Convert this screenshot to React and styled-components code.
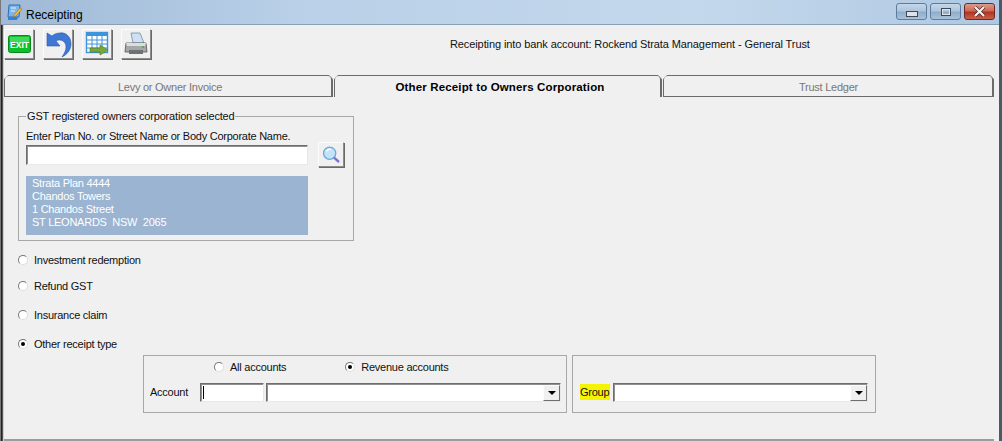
import React from 'react';
import styled, { createGlobalStyle } from 'styled-components';

const Global = createGlobalStyle`
  html, body { margin: 0; padding: 0; background: #f0f0f0; }
  body { font-family: "Liberation Sans", Arial, sans-serif; font-size: 11px; letter-spacing: -0.25px; color: #111; overflow: hidden; }
`;

const Page = styled.div`
  width: 1002px;
  height: 441px;
  display: flex;
  flex-direction: column;
  box-sizing: border-box;
  overflow: hidden;
  background: #f0f0f0;
  border-left: 1px solid #777;
  border-right: 3px solid #4a5a68;
  box-shadow: inset 1px 0 0 #222, inset 2px 0 0 #555, inset 3px 0 0 #ccc;
`;

const TitleBar = styled.div`
  height: 25px;
  flex: none;
  display: flex;
  align-items: center;
  padding: 0 4px 0 6px;
  box-sizing: border-box;
  background: linear-gradient(90deg, #9fb9d6 0%, #b9d0e8 30%, #c4d8ec 70%, #aec8e2 100%);
  border-bottom: 1px solid #8a9fb4;
`;

const TitleText = styled.span`
  margin: 6px 0 0 3px;
  font-size: 12px;
  letter-spacing: 0;
  color: #000;
  flex: 1;
`;

const WinButtons = styled.div`
  display: flex;
  gap: 3px;
  margin-top: -1px;
`;

const WinButton = styled.div`
  width: 31px;
  height: 17px;
  box-sizing: border-box;
  border: 1px solid ${p => (p.$close ? '#6e2a22' : '#5e7d9e')};
  border-radius: 3px;
  background: ${p =>
    p.$close
      ? 'linear-gradient(180deg, #dc9b8c 0%, #cc6a58 45%, #b5331f 55%, #c8604c 100%)'
      : 'linear-gradient(180deg, #c6d6e7 0%, #b0c6dd 45%, #8fadcb 55%, #a8c2db 100%)'};
  display: flex;
  align-items: center;
  justify-content: center;
`;

const Toolbar = styled.div`
  height: 50px;
  flex: none;
  display: flex;
  padding: 4px 0 0 3px;
  box-sizing: border-box;
  gap: 9px;
`;

const ToolButton = styled.div`
  width: 30px;
  height: 30px;
  box-sizing: border-box;
  background: #f0f0f0;
  border: 1px solid;
  border-color: #fcfcfc #8c8c8c #8c8c8c #fcfcfc;
  box-shadow: 1px 1px 0 #696969;
  display: flex;
  align-items: center;
  justify-content: center;
`;

const BankNote = styled.div`
  flex: 1;
  padding-top: 9px;
  padding-left: 290px;
  font-size: 11px;
  letter-spacing: -0.1px;
  white-space: nowrap;
`;

const Tabs = styled.div`
  display: flex;
  height: 22px;
  flex: none;
  margin-left: 3px;
  width: 990px;
  gap: 1px;
`;

const Tab = styled.div`
  width: ${p => p.$w}px;
  box-sizing: border-box;
  text-align: center;
  line-height: 22px;
  padding-left: ${p => p.$pad}px;
  border: 1px solid #6c6c6c;
  border-bottom: ${p => (p.$active ? 'none' : '1px solid #6c6c6c')};
  border-right-width: 2px;
  clip-path: polygon(4px 0, calc(100% - 4px) 0, 100% 4px, 100% 100%, 0 100%, 0 4px);
  border-radius: 5px 5px 0 0;
  font-size: ${p => (p.$active ? '11.5px' : '11px')};
  letter-spacing: ${p => (p.$active ? '0.15px' : '-0.25px')};
  font-weight: ${p => (p.$active ? 700 : 400)};
  color: ${p => (p.$active ? '#000' : '#777')};
`;

const Panel = styled.div`
  margin-left: 3px;
  width: 990px;
  height: 344px;
  flex: none;
  box-sizing: border-box;
  padding: 19px 0 0 14px;
  border-bottom: 2px solid #9c9c9c;
`;

const Group = styled.div`
  position: relative;
  width: 336px;
  height: 125px;
  box-sizing: border-box;
  border: 1px solid #a8a8a8;
  padding: 12px 7px 0 7px;
`;

const Legend = styled.span`
  position: absolute;
  left: 7px;
  top: -7px;
  padding: 0 1px;
  background: #f0f0f0;
  line-height: 13px;
  letter-spacing: -0.18px;
`;

const FieldLabel = styled.div`
  line-height: 14px;
  height: 16px;
`;

const SearchRow = styled.div`
  display: flex;
  align-items: flex-start;
  gap: 10px;
`;

const Sunken = styled.div`
  box-sizing: border-box;
  width: ${p => p.$w}px;
  height: ${p => p.$h || 20}px;
  background: #fff;
  border: 1px solid;
  border-color: #6e6e6e #e8e8e8 #e8e8e8 #6e6e6e;
  box-shadow: inset 1px 1px 0 #8f8f8f;
  display: flex;
  align-items: center;
  justify-content: flex-end;
  flex: none;
`;

const Caret = styled.span`
  width: 1px;
  height: 13px;
  background: #000;
  margin: 0 auto 0 2px;
`;

const SearchButton = styled(ToolButton)`
  width: 26px;
  height: 25px;
  margin-top: -3px;
`;

const Address = styled.div`
  width: 282px;
  height: 59px;
  margin-top: 9px;
  padding: 1px 6px;
  box-sizing: border-box;
  background: #9ab4d2;
  color: #fff;
  line-height: 13px;
`;

const RadioRow = styled.div`
  display: flex;
  align-items: center;
  gap: 6px;
  height: 14px;
  margin-top: ${p => p.$top || 0}px;
`;

const RadioDot = styled.span`
  width: 10px;
  height: 10px;
  flex: none;
  border-radius: 50%;
  background: #fff;
  border: 1px solid;
  border-color: #777 #ddd #ddd #777;
  box-sizing: border-box;
  display: flex;
  align-items: center;
  justify-content: center;
  &::after {
    content: '';
    display: ${p => (p.$on ? 'block' : 'none')};
    width: 4px;
    height: 4px;
    border-radius: 50%;
    background: #000;
  }
`;

const Radio = ({ on, top, children }) => (
  <RadioRow $top={top}>
    <RadioDot $on={on} />
    {children}
  </RadioRow>
);

const SubRow = styled.div`
  display: flex;
  gap: 5px;
  margin: 4px 0 0 125px;
`;

const SubBox = styled.div`
  width: ${p => p.$w}px;
  height: 58px;
  box-sizing: border-box;
  border: 1px solid #a8a8a8;
`;

const AccountChoice = styled.div`
  display: flex;
  height: 14px;
  margin-top: 4px;
  padding-left: 70px;
  gap: 59px;
`;

const AccountLine = styled.div`
  display: flex;
  align-items: center;
  gap: 2px;
  padding-left: 6px;
  margin-top: 9px;
`;

const GroupLine = styled(AccountLine)`
  margin-top: 27px;
  padding-left: 7px;
  gap: 3px;
`;

const RowLabel = styled.span`
  width: ${p => p.$w}px;
  flex: none;
  margin-top: -1px;
`;

const Marked = styled.span`
  width: 30px;
  flex: none;
  margin-top: -2px;
  background: #f4f400;
  line-height: 16px;
`;

const DropButton = styled.div`
  width: 17px;
  height: 16px;
  box-sizing: border-box;
  background: #f0f0f0;
  border: 1px solid;
  border-color: #fcfcfc #6e6e6e #6e6e6e #fcfcfc;
  display: flex;
  align-items: center;
  justify-content: center;
  &::after {
    content: '';
    border: 4px solid transparent;
    border-top: 4px solid #000;
    border-bottom: none;
  }
`;

const AppIcon = () => (
  <svg width="16" height="17" viewBox="0 0 16 17">
    <path d="M2 1h11l-1 12H1z" fill="#7fb4e6" stroke="#2a6cb8" />
    <path d="M4 4h5M4 7h4" stroke="#e8f2ff" />
    <path d="M7 11l6-7 2 1-6 7-3 1z" fill="#f0c040" stroke="#a87018" strokeWidth=".6" />
    <path d="M1 13h10l-1 3H1z" fill="#3a80d0" />
  </svg>
);

const ExitIcon = () => (
  <svg width="23" height="18" viewBox="0 0 23 18">
    <rect x=".5" y=".5" width="22" height="17" rx="2" fill="#0cc02c" stroke="#078a1c" />
    <rect x="2" y="2" width="19" height="6" fill="#58e070" opacity=".7" />
    <text x="11.5" y="13" textAnchor="middle" fontFamily="Liberation Sans" fontWeight="700" fontSize="8.5" letterSpacing="0" fill="#fff">EXIT</text>
  </svg>
);

const UndoIcon = () => (
  <svg width="27" height="27" viewBox="0 0 27 27">
    <path
      d="M2 2v13h13l-4-5c3-2 7-1 9 2 2 4 1 8-3 14 6-3 9-8 9-13 0-8-6-12-11-11-3 0-6 1-8 3z"
      fill="#3f78d4"
      stroke="#2a58b0"
      strokeWidth=".6"
    />
  </svg>
);

const GridIcon = () => (
  <svg width="26" height="26" viewBox="0 0 26 26">
    <rect x="2.500" y="1.500" width="21" height="20" fill="#fff" stroke="#3c94dc" strokeWidth="1.4" />
    <rect x="3" y="2" width="20" height="3" fill="#3c94dc" />
    <path d="M3 9h20M3 13h20M3 17h20M8 5v16M13 5v16M18 5v16" stroke="#3c94dc" />
    <path d="M6 17h10v-3l8 5-8 5v-3H6z" fill="#78a838" stroke="#4a7420" strokeWidth=".6" />
  </svg>
);

const PrinterIcon = () => (
  <svg width="26" height="26" viewBox="0 0 26 26">
    <path d="M8 2h9l4 10H10z" fill="#cfe0f0" stroke="#6f8ea8" strokeWidth=".8" />
    <path d="M3 12h20l1 9H2z" fill="#a4a8a8" stroke="#505454" strokeWidth=".8" />
    <path d="M3 12h20l-1 3H4z" fill="#dcdede" />
    <rect x="6" y="19" width="14" height="4" fill="#6e7272" />
    <circle cx="20" cy="16" r="1" fill="#48a838" />
  </svg>
);

const SearchIcon = () => (
  <svg width="18" height="18" viewBox="0 0 20 20">
    <circle cx="8.500" cy="8" r="6.800" fill="#c4e2f6" stroke="#6aa8d8" strokeWidth="1.400" />
    <path d="M5 6c1-2 3-2.500 5-2" stroke="#fff" strokeWidth="1.400" fill="none" />
    <path d="M14 13.500l4 3.500" stroke="#8a70c4" strokeWidth="2.800" strokeLinecap="round" />
  </svg>
);

const MinGlyph = styled.span`
  width: 10px;
  height: 4px;
  margin-top: 5px;
  background: #dfe3e8;
  border: 1px solid #3c4a58;
`;

const MaxGlyph = styled.span`
  width: 6px;
  height: 4px;
  background: transparent;
  border: 2px solid #dfe3e8;
  outline: 1px solid #3c4a58;
  outline-offset: -1px;
`;

const CloseGlyph = () => (
  <svg width="13" height="11" viewBox="0 0 13 11">
    <path d="M2 1l9 9M11 1l-9 9" stroke="#4a2018" strokeWidth="3.400" />
    <path d="M2 1l9 9M11 1l-9 9" stroke="#f4f4f4" strokeWidth="2.200" />
  </svg>
);

const App = () => (
  <Page>
    <Global />
    <TitleBar>
      <AppIcon />
      <TitleText>Receipting</TitleText>
      <WinButtons>
        <WinButton><MinGlyph /></WinButton>
        <WinButton><MaxGlyph /></WinButton>
        <WinButton $close><CloseGlyph /></WinButton>
      </WinButtons>
    </TitleBar>
    <Toolbar>
      <ToolButton><ExitIcon /></ToolButton>
      <ToolButton><UndoIcon /></ToolButton>
      <ToolButton><GridIcon /></ToolButton>
      <ToolButton><PrinterIcon /></ToolButton>
      <BankNote>Receipting into bank account: Rockend Strata Management - General Trust</BankNote>
    </Toolbar>
    <Tabs>
      <Tab $w={329} $pad={4}>Levy or Owner Invoice</Tab>
      <Tab $w={328} $pad={5} $active>Other Receipt to Owners Corporation</Tab>
      <Tab $w={331} $pad={1}>Trust Ledger</Tab>
    </Tabs>
    <Panel>
      <Group>
        <Legend>GST registered owners corporation selected</Legend>
        <FieldLabel>Enter Plan No. or Street Name or Body Corporate Name.</FieldLabel>
        <SearchRow>
          <Sunken $w={282} />
          <SearchButton><SearchIcon /></SearchButton>
        </SearchRow>
        <Address>
          Strata Plan 4444<br />
          Chandos Towers<br />
          1 Chandos Street<br />
          ST LEONARDS&nbsp; NSW&nbsp; 2065
        </Address>
      </Group>
      <Radio top={12}>Investment redemption</Radio>
      <Radio top={12}>Refund GST</Radio>
      <Radio top={15}>Insurance claim</Radio>
      <Radio top={15} on>Other receipt type</Radio>
      <SubRow>
        <SubBox $w={424}>
          <AccountChoice>
            <Radio>All accounts</Radio>
            <Radio on>Revenue accounts</Radio>
          </AccountChoice>
          <AccountLine>
            <RowLabel $w={48}>Account</RowLabel>
            <Sunken $w={64} $h={19}><Caret /></Sunken>
            <Sunken $w={295} $h={19}><DropButton /></Sunken>
          </AccountLine>
        </SubBox>
        <SubBox $w={304}>
          <GroupLine>
            <Marked>Group</Marked>
            <Sunken $w={255} $h={19}><DropButton /></Sunken>
          </GroupLine>
        </SubBox>
      </SubRow>
    </Panel>
  </Page>
);

export default App;
